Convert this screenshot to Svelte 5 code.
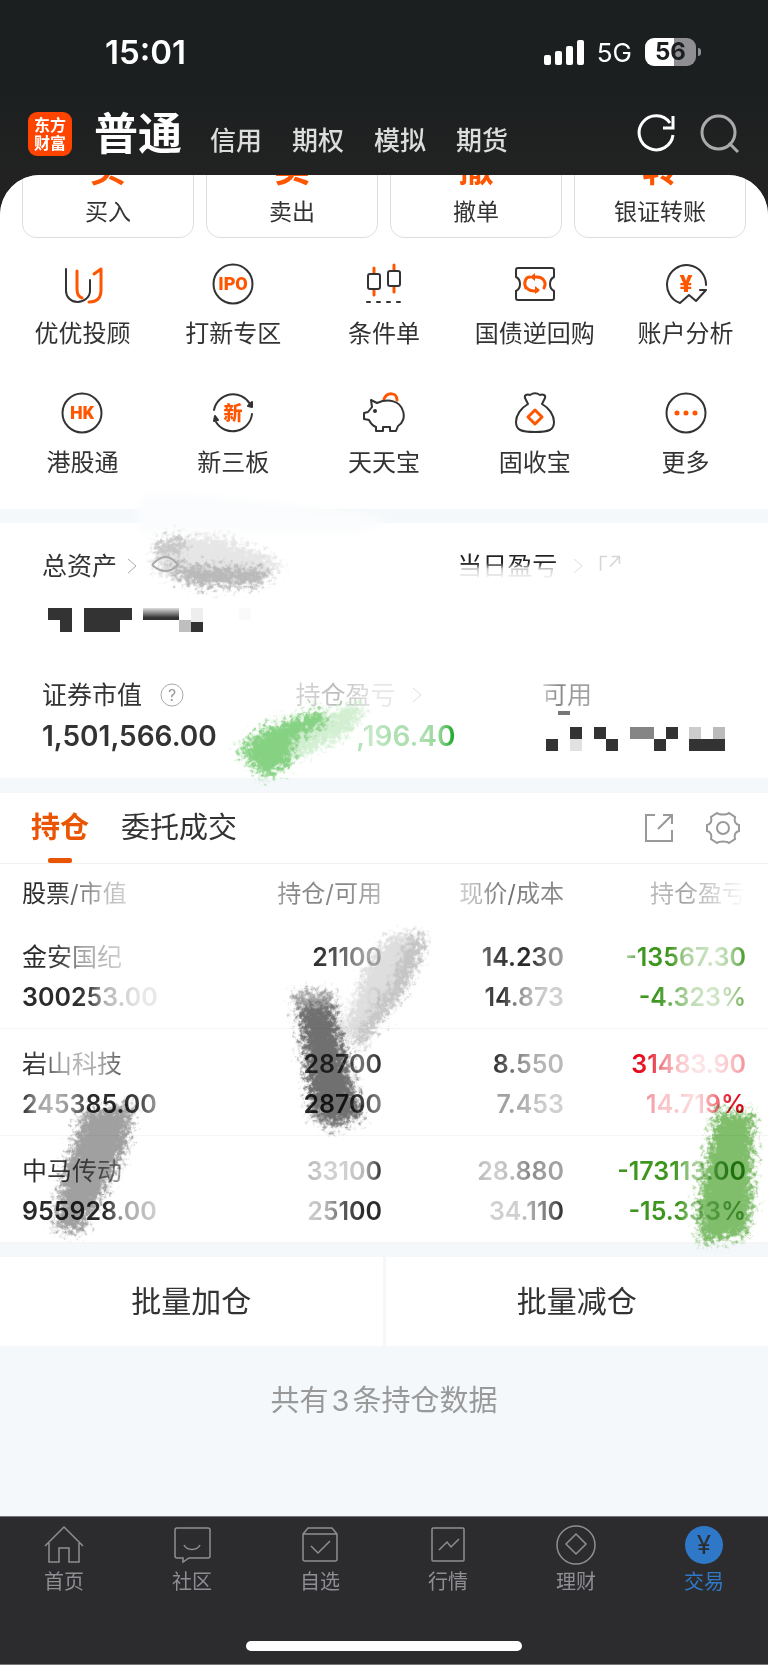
<script>
    const accounts = ["信用", "期权", "模拟", "期货"];

    const trades = [
        { glyph: "买", label: "买入" },
        { glyph: "卖", label: "卖出" },
        { glyph: "撤", label: "撤单" },
        { glyph: "转", label: "银证转账" },
    ];

    const tools = [
        { icon: "advisor", label: "优优投顾" },
        { icon: "ipo", label: "打新专区" },
        { icon: "candles", label: "条件单" },
        { icon: "repo", label: "国债逆回购" },
        { icon: "analysis", label: "账户分析" },
        { icon: "hk", label: "港股通" },
        { icon: "newboard", label: "新三板" },
        { icon: "piggy", label: "天天宝" },
        { icon: "bag", label: "固收宝" },
        { icon: "more", label: "更多" },
    ];

    // text, tone, and the opacity along the text from 0 to 9
    const headers = [
        ["股票/市值", "ink", "998532"],
        ["持仓/可用", "ink", "4555543"],
        ["现价/成本", "ink", "2356555"],
        ["持仓盈亏", "ink", "3343210"],
    ];

    const holdings = [
        [
            [["金安国纪", "ink", "998432"], ["300253.00", "ink", "999983211"]],
            [["21100", "ink", "98643"], ["21100", "ink", "00001"]],
            [["14.230", "ink", "689954"], ["14.873", "ink", "795322"]],
            [["-13567.30", "green", "399943249"], ["-4.323%", "green", "9963237"]],
        ],
        [
            [["岩山科技", "ink", "984347"], ["245385.00", "ink", "943599984"]],
            [["28700", "ink", "88869"], ["28700", "ink", "99985"]],
            [["8.550", "ink", "96433"], ["7.453", "ink", "44322"]],
            [["31483.90", "red", "98421124"], ["14.719%", "red", "4221489"]],
        ],
        [
            [["中马传动", "ink", "998764"], ["955928.00", "ink", "999999432"]],
            [["33100", "ink", "32239"], ["25100", "ink", "23799"]],
            [["28.880", "ink", "323544"], ["34.110", "ink", "222469"]],
            [["-173113.00", "green", "9999953699"], ["-15.333%", "green", "99994467"]],
        ],
    ];

    const navs = [
        { icon: "home", label: "首页" },
        { icon: "community", label: "社区" },
        { icon: "watchlist", label: "自选" },
        { icon: "market", label: "行情" },
        { icon: "wealth", label: "理财" },
        { icon: "trade", label: "交易", active: true },
    ];

    const tones = {
        ink: "42, 42, 42",
        green: "62, 150, 30",
        lime: "10, 160, 20",
        red: "228, 0, 18",
    };

    function fade(tone, levels) {
        const stops = [...levels].map((n) => `rgba(${tones[tone]}, ${(n / 9).toFixed(2)})`);
        return `background-image: linear-gradient(90deg, ${stops.join(", ")})`;
    }
</script>

{#snippet faded([text, tone, levels])}
    <span class="faded" style={fade(tone, levels)}>{text}</span>
{/snippet}

{#snippet chevron()}
    <svg class="chevron" width="10" height="16" viewBox="0 0 10 16"><path d="M1 1l8 7-8 7" /></svg>
{/snippet}

<div class="page">
    <header>
        <div class="status">
            <span class="time">15:01</span>
            <div class="signals">
                <svg width="40" height="25" viewBox="0 0 40 25" fill="#fff">
                    <rect x="0" y="15" width="7" height="10" rx="2" />
                    <rect x="11" y="11" width="7" height="14" rx="2" />
                    <rect x="22" y="6" width="7" height="19" rx="2" />
                    <rect x="33" y="0" width="7" height="25" rx="2" />
                </svg>
                <span class="network">5G</span>
                <span class="battery">56</span>
            </div>
        </div>
        <nav class="accounts">
            <a class="logo" href="#home"><span>东方</span><span>财富</span></a>
            <a class="current" href="#normal">普通</a>
            {#each accounts as account}
                <a class="account" href="#account">{account}</a>
            {/each}
            <button class="refresh" aria-label="刷新">
                <svg width="40" height="40" viewBox="0 0 40 40">
                    <path d="M33 9A17 17 0 1 0 36 21M36 2v12H26" />
                </svg>
            </button>
            <button class="search" aria-label="搜索">
                <svg width="40" height="40" viewBox="0 0 40 40">
                    <circle cx="18.5" cy="18.5" r="16.5" /><path d="M29 29l9 9" />
                </svg>
            </button>
        </nav>
    </header>

    <main>
        <section class="shortcuts">
            <div class="trades">
                {#each trades as trade}
                    <button><b>{trade.glyph}</b><span>{trade.label}</span></button>
                {/each}
            </div>
            <div class="tools">
                {#each tools as tool}
                    <a href="#tool">
                        <svg class="tool" width="42" height="42" viewBox="0 0 42 42">
                            {#if tool.icon === "advisor"}
                                <path d="M5 6v22c0 6 5 11 11.5 11S29 34 29 28V17" />
                                <path class="hot" d="M16 8v18c0 5 2 8 5 9" />
                                <path class="hot" d="M33 11l7-5v21c0 8-4 12-12 12" />
                            {:else if tool.icon === "ipo"}
                                <circle cx="21" cy="21" r="19.5" />
                                <text x="21" y="27" font-size="18">IPO</text>
                            {:else if tool.icon === "candles"}
                                <path class="hot" d="M11 5v5M11 27v5M31 2v5M31 24v5" />
                                <rect x="5" y="11" width="12" height="15" rx="2" />
                                <rect x="25" y="8" width="12" height="15" rx="2" />
                                <path d="M4 39h3M14 39h3M24 39h3M34 39h3" />
                            {:else if tool.icon === "repo"}
                                <path d="M4 5h34q2 0 2 2v7c-2 1-4 4-4 7s2 6 4 7v7q0 2-2 2H4q-2 0-2-2v-7c2-1 4-4 4-7s-2-6-4-7V7q0-2 2-2z" />
                                <path class="hot" d="M12 25c-3-6 0-11 4-11M19 14h4c6 0 10 5 7 11M20 28h2M13 25c2 3 5 3 10 3" />
                                <path class="hot-solid" d="M16 14l5-4v8zM26 27l-5-4v8z" />
                            {:else if tool.icon === "analysis"}
                                <path d="M41 22A19.5 19.5 0 1 0 15 40l9-8 7 6 10-11h-6" />
                                <text x="21" y="29" font-size="24">¥</text>
                            {:else if tool.icon === "hk"}
                                <circle cx="21" cy="21" r="19.5" />
                                <text x="21" y="27" font-size="18">HK</text>
                            {:else if tool.icon === "newboard"}
                                <path d="M2 18A19.5 19.5 0 0 1 38 12M40 22A19.5 19.5 0 0 1 4 30" />
                                <path class="solid" d="M36 14l4 1v-5zM2 29l1-5 3 4z" />
                                <text x="21" y="28" font-size="19">新</text>
                            {:else if tool.icon === "piggy"}
                                <path class="hot" d="M21 7c3-7 13-7 13 1" />
                                <path d="M14 11L8 8l1 7-4 5-4 1v6l5 1c2 4 4 6 7 7v4h7v-4h7v4h6l2-5c5-3 7-9 5-15-3-10-14-13-26-8z" />
                                <circle class="solid" cx="12" cy="19" r="1" />
                            {:else if tool.icon === "bag"}
                                <path d="M14 12L11 6c-1-3 2-4 5-3 3-2 7-2 10 0 3-1 6 0 5 3l-3 6c7 4 12 11 12 18 0 8-5 10-19 10S2 38 2 30c0-7 5-14 12-18z" />
                                <path class="hot" d="M21 18l7 7-7 7-7-7z" />
                            {:else}
                                <circle cx="21" cy="21" r="19.5" />
                                <path class="dots" d="M12 21h0M21 21h0M30 21h0" />
                            {/if}
                        </svg>
                        <span>{tool.label}</span>
                    </a>
                {/each}
            </div>
        </section>

        <section class="assets">
            <div class="totals">
                <div class="label">总资产 {@render chevron()}</div>
                <div class="label wide">
                    <span class="erased">当日盈亏</span>
                    {@render chevron()}
                    <svg class="popout pale" width="22" height="22" viewBox="0 0 28 28">
                        <path d="M2 20V2h8M16 2h10v9M26 2L14 15" />
                    </svg>
                </div>
            </div>
            <svg class="mosaic" width="220" height="24" viewBox="0 0 220 24">
                <defs>
                    <linearGradient id="worn" x2="0" y2="1">
                        <stop offset="0" stop-color="#ddd" />
                        <stop offset="0.5" stop-color="#777" />
                        <stop offset="0.8" stop-color="#333" />
                    </linearGradient>
                </defs>
                <path d="M6 0h24v24H18V12H6zM42 0h48v12H78v12H42zM149 14h12v10h-12z" />
                <rect x="101" width="36" height="12" fill="url(#worn)" />
                <rect x="137" y="12" width="12" height="12" fill="#bfbfbf" />
                <rect x="149" width="12" height="14" fill="#eee" />
                <rect x="197" width="12" height="12" fill="#fafafa" />
            </svg>
            <div class="details">
                <div>
                    <div class="label">
                        证券市值
                        <svg class="help" width="24" height="24" viewBox="0 0 24 24">
                            <circle cx="12" cy="12" r="11" /><text x="12" y="18">?</text>
                        </svg>
                    </div>
                    <div class="value">1,501,566.00</div>
                </div>
                <div>
                    <div class="label wide">{@render faded(["持仓盈亏", "ink", "223211"])} {@render chevron()}</div>
                    <div class="value profit">{@render faded([",196.40", "lime", "3233349"])}</div>
                </div>
                <div>
                    <div class="label">{@render faded(["可用", "ink", "2544"])}</div>
                    <svg class="mosaic cash" width="184" height="40" viewBox="0 0 184 40">
                        <path d="M4 28h12v12H4zM28 16h12v12H28zM52 16h12v12h12v12H64V28H52zM124 16h12v12h-12v12h-12V28h12zM147 28h36v12h-36z" />
                        <rect x="28" y="28" width="12" height="12" fill="#e1e1e1" />
                        <rect x="88" y="16" width="24" height="12" fill="#858585" />
                        <rect x="147" y="16" width="12" height="12" fill="#ccc" />
                        <rect x="171" y="16" width="12" height="12" fill="#bbb" />
                        <rect x="16" width="12" height="4" fill="#777" />
                    </svg>
                </div>
            </div>
            <svg class="smears" width="768" height="320" viewBox="0 480 768 320" aria-hidden="true">
                <defs>
                    <filter id="chalk" x="-30%" y="-30%" width="160%" height="160%">
                        <feTurbulence type="fractalNoise" baseFrequency="0.22" numOctaves="4" seed="4" result="noise" />
                        <feGaussianBlur in="SourceGraphic" stdDeviation="3" result="soft" />
                        <feDisplacementMap in="soft" in2="noise" scale="26" xChannelSelector="R" yChannelSelector="G" />
                        <feGaussianBlur stdDeviation="0.6" />
                    </filter>
                    <filter id="mist" x="-20%" y="-60%" width="140%" height="220%">
                        <feGaussianBlur stdDeviation="5" />
                    </filter>
                </defs>
                <path d="M136 508l10-14 60 2 150 16 36 8-30 12H140z" fill="#fbfcfd" filter="url(#mist)" />
                <g filter="url(#chalk)">
                    <path d="M154 543l18-7 50 1 42 17 20 12-34 18-60 2-34-14z" fill="#e6e6e6" />
                    <path d="M156 543l18-6 14 4-10 12-20 4z" fill="#c6c6c6" />
                    <path d="M168 564l94 4 10 6-14 12-60 1-26-12z" fill="#b9b9b9" />
                    <path d="M290 730l62-26 14 4-18 26-60 29z" fill="#d2efd2" />
                    <path d="M238 750l22-20 62-22 6 14-34 19-1 22-30 16z" fill="#86d283" />
                </g>
                <path class="eye" d="M152 565q14-16 26 0-12 12-26 0" />
            </svg>
        </section>

        <section class="positions">
            <div class="tabs">
                <button class="tab active">持仓</button>
                <button class="tab">委托成交</button>
                <button class="tab-icon first" aria-label="分享">
                    <svg class="popout" width="28" height="28" viewBox="0 0 28 28">
                        <path d="M10 1H1v26h26V16M18 1h9v9M27 1L13 15" />
                    </svg>
                </button>
                <button class="tab-icon" aria-label="设置">
                    <svg class="popout" width="34" height="34" viewBox="0 0 34 34">
                        <path d="M11 2c2 2 10 2 12 0l6 4c-1 4 0 7 4 8v6c-4 1-5 4-4 8l-6 4c-2-2-10-2-12 0l-6-4c1-4 0-7-4-8v-6c4-1 5-4 4-8z" />
                        <circle cx="17" cy="17" r="6" />
                    </svg>
                </button>
            </div>
            <table>
                <thead>
                    <tr>
                        {#each headers as header}
                            <th scope="col">{@render faded(header)}</th>
                        {/each}
                    </tr>
                </thead>
                <tbody>
                    {#each holdings as holding}
                        <tr>
                            {#each holding as [top, bottom]}
                                <td>
                                    <div>{@render faded(top)}</div>
                                    <div>{@render faded(bottom)}</div>
                                </td>
                            {/each}
                        </tr>
                    {/each}
                </tbody>
            </table>
            <svg class="strokes" width="768" height="340" viewBox="0 920 768 340" aria-hidden="true">
                <g filter="url(#chalk)">
                    <path d="M388 936l36-3-1 20-62 98-18-22 25-66z" fill="#dedede" />
                    <path d="M410 936l14-4-2 24-20 40-42 50-6-8 36-50z" fill="#c4c4c4" />
                    <path d="M294 992l38 0 31 126-30 12-22-12z" fill="#a5a5a5" />
                    <path d="M300 1006l31-2 28 112-27 8-20-16z" fill="#707070" />
                    <path d="M84 1110l50-6-8 46-24 46-22 38-26-6 8-52z" fill="#a0a0a0" />
                    <path d="M716 1110l38 4-2 94-6 28-46 8-2-44 10-50z" fill="#80be6c" />
                </g>
            </svg>
        </section>

        <div class="batch">
            <button>批量加仓</button>
            <button>批量减仓</button>
        </div>
        <p class="count">共有<span>3</span>条持仓数据</p>
    </main>

    <footer>
        <nav class="bottom">
            {#each navs as nav}
                <a class:active={nav.active} href="#nav">
                    <svg width="40" height="40" viewBox="0 0 40 40">
                        {#if nav.icon === "home"}
                            <path d="M1 21L20 2l19 19M5 18v19h10V23h10v14h10V18" />
                        {:else if nav.icon === "community"}
                            <path d="M3 5q0-2 2-2h31q2 0 2 2v26q0 2-2 2H17l-6 4v-4H5q-2 0-2-2zM12 20c3 6 13 6 16 0" />
                        {:else if nav.icon === "watchlist"}
                            <path d="M3 9l5-6h24l5 6v25q0 2-2 2H5q-2 0-2-2zM3 9h34M11 21l7 7 12-12" />
                        {:else if nav.icon === "market"}
                            <rect x="4" y="3" width="32" height="33" rx="1" /><path d="M11 25l8-8 4 5 8-8" />
                        {:else if nav.icon === "wealth"}
                            <circle cx="20" cy="20" r="19" /><path d="M20 9l10 10-10 10L10 19z" />
                        {:else}
                            <circle class="disc" cx="20" cy="20" r="19" /><text x="20" y="29">¥</text>
                        {/if}
                    </svg>
                    <span>{nav.label}</span>
                </a>
            {/each}
        </nav>
        <div class="indicator"></div>
    </footer>
</div>

<style>
    :global(body) {
        margin: 0;
        background: #1b1f20;
    }

    .page {
        font-family: Inter, "Noto Sans CJK SC", sans-serif;
        color: #333;
        background: linear-gradient(#1b1f20 80px, #222 175px);
    }

    button {
        font: inherit;
        color: inherit;
        border: 0;
        padding: 0;
        background: none;
        cursor: pointer;
    }

    a {
        color: inherit;
        text-decoration: none;
    }

    svg {
        display: block;
        flex: none;
    }

    .status {
        display: flex;
        align-items: center;
        justify-content: space-between;
        height: 104px;
        padding: 0 67px 0 105px;
        box-sizing: border-box;
        color: #fff;
    }

    .time {
        font-size: 33px;
        font-weight: 600;
    }

    .signals {
        display: flex;
        align-items: center;
        gap: 13px;
    }

    .network {
        font-size: 26px;
    }

    .battery {
        position: relative;
        width: 51px;
        line-height: 28px;
        border-radius: 9px;
        background: linear-gradient(90deg, #fff 56%, #8e8e93 56%);
        color: #1b1f20;
        font-size: 24px;
        font-weight: 700;
        text-align: center;
        margin-right: 5px;
    }

    .battery::after {
        content: "";
        position: absolute;
        right: -5px;
        top: 10px;
        width: 3px;
        height: 8px;
        border-radius: 0 3px 3px 0;
        background: #8e8e93;
    }

    .accounts {
        display: flex;
        align-items: center;
        height: 71px;
        padding: 0 28px;
        color: #dcdcdc;
    }

    .logo {
        display: flex;
        flex-direction: column;
        justify-content: center;
        width: 44px;
        height: 44px;
        margin: 0 22px 12px 0;
        border-radius: 9px;
        background: #ff4400;
        color: #fff;
        font-size: 16px;
        font-weight: 700;
        line-height: 18px;
        text-align: center;
    }

    .current {
        margin: 0 28px 12px 0;
        color: #fff;
        font-size: 44px;
        font-weight: 700;
        line-height: 50px;
    }

    .account {
        margin: 2px 30px 0 0;
        font-size: 26px;
        font-weight: 500;
        line-height: 40px;
    }

    .refresh,
    .search {
        margin-bottom: 12px;
        fill: none;
        stroke: #fff;
        stroke-width: 3;
    }

    .refresh {
        margin-left: auto;
    }

    .search {
        margin-left: 23px;
        stroke: #aaa;
    }

    main {
        overflow: hidden;
        border-radius: 40px 40px 0 0;
        background: #f4f8fa;
    }

    section {
        position: relative;
        background: #fff;
    }

    .shortcuts {
        padding-bottom: 31px;
    }

    .trades {
        display: grid;
        grid-template-columns: repeat(4, 1fr);
        gap: 12px;
        margin-top: -44px;
        padding: 0 22px;
    }

    .trades button {
        display: flex;
        flex-direction: column;
        align-items: center;
        gap: 6px;
        padding: 15px 0 10px;
        border: 1px solid #ddd;
        border-radius: 14px;
        font-size: 23px;
        line-height: 30px;
    }

    .trades b {
        color: #ff5500;
        font-size: 36px;
        line-height: 44px;
    }

    .tools {
        display: grid;
        grid-template-columns: repeat(5, 1fr);
        row-gap: 43px;
        padding: 25px 7px 0;
    }

    .tools a {
        display: flex;
        flex-direction: column;
        align-items: center;
        gap: 14px;
        font-size: 24px;
        line-height: 30px;
    }

    .tool {
        fill: none;
        stroke: #333;
        stroke-width: 2;
        stroke-linejoin: round;
        stroke-linecap: round;
    }

    .tool .hot {
        stroke: #ff5500;
        stroke-width: 3;
    }

    .tool .dots {
        stroke: #ff5500;
        stroke-width: 5;
    }

    .tool .solid {
        fill: #333;
    }

    .tool .hot-solid {
        fill: #ff5500;
        stroke: none;
    }

    .tool text {
        fill: #ff5500;
        stroke: none;
        font-family: Roboto, "Noto Sans CJK SC", sans-serif;
        font-weight: 900;
        text-anchor: middle;
    }

    .assets {
        margin: 14px 0 15px;
        padding: 28px 42px 24px;
    }

    .totals {
        display: grid;
        grid-template-columns: 414fr 268fr;
    }

    .details {
        display: grid;
        grid-template-columns: 253fr 246fr 183fr;
        margin-top: 48px;
    }

    .label {
        display: flex;
        align-items: center;
        gap: 10px;
        font-size: 25px;
        line-height: 30px;
    }

    .label.wide {
        gap: 16px;
    }

    .chevron {
        fill: none;
        stroke: #aaa;
        stroke-width: 1;
    }

    .wide .chevron {
        opacity: 0.4;
    }

    .erased {
        background: linear-gradient(#222 40%, #ccc 60%, #f4f4f4 90%);
        background-clip: text;
        color: transparent;
    }

    .faded {
        background-clip: text;
        color: transparent;
    }

    .popout {
        fill: none;
        stroke: #999;
        stroke-width: 2;
    }

    .pale {
        opacity: 0.4;
    }

    .mosaic {
        margin-top: 27px;
        fill: #333;
    }

    .mosaic.cash {
        margin-top: 1px;
    }

    .help {
        margin-left: 8px;
        fill: none;
        stroke: #aaa;
        stroke-width: 1;
    }

    .help text {
        fill: #999;
        stroke: none;
        font-size: 16px;
        text-anchor: middle;
    }

    .value {
        margin-top: 8px;
        font-size: 28px;
        font-weight: 600;
        line-height: 36px;
    }

    .profit {
        width: 160px;
        text-align: right;
    }

    .smears,
    .strokes {
        position: absolute;
        left: 0;
        pointer-events: none;
    }

    .smears {
        top: -43px;
    }

    .eye {
        fill: none;
        stroke: #aaa;
        stroke-width: 2;
    }

    .tabs {
        display: flex;
        align-items: center;
        height: 70px;
        padding: 0 28px 0 31px;
        border-bottom: 1px solid #f0f0f0;
    }

    .tab {
        position: relative;
        margin-right: 32px;
        font-size: 29px;
        line-height: 70px;
    }

    .tab.active {
        color: #ea5504;
        font-weight: 700;
    }

    .tab.active::after {
        content: "";
        position: absolute;
        left: 50%;
        bottom: 0;
        width: 24px;
        height: 5px;
        margin-left: -12px;
        border-radius: 2px;
        background: #ea5504;
    }

    .tab-icon.first {
        margin: 0 33px 0 auto;
    }

    table {
        width: 100%;
        table-layout: fixed;
        border-collapse: collapse;
    }

    th,
    td {
        padding: 0;
        text-align: right;
    }

    th {
        box-sizing: border-box;
        height: 58px;
        padding-bottom: 4px;
        font-size: 24px;
        font-weight: 400;
    }

    td {
        padding: 15px 0 11px;
        border-bottom: 1px solid #f5f5f5;
        font-size: 25px;
        font-weight: 600;
        line-height: 40px;
    }

    th:first-child,
    td:first-child {
        padding-left: 22px;
        text-align: left;
    }

    td:first-child div:first-child {
        font-weight: 400;
    }

    th:nth-child(3) {
        width: 182px;
    }

    th:last-child {
        width: 204px;
    }

    th:last-child,
    td:last-child {
        box-sizing: border-box;
        padding-right: 22px;
    }

    .strokes {
        bottom: -17px;
        z-index: 1;
        mix-blend-mode: multiply;
    }

    .batch {
        display: grid;
        grid-template-columns: 1fr 1fr;
        gap: 3px;
        margin-top: 14px;
    }

    .batch button {
        background: #fff;
        font-size: 30px;
        line-height: 89px;
    }

    .count {
        margin: 0;
        padding: 35px 0 95px;
        color: #999;
        font-size: 29px;
        line-height: 40px;
        text-align: center;
    }

    .count span {
        margin: 0 3px;
    }

    footer {
        padding-bottom: 13px;
        border-top: 1px solid #777;
        border-bottom: 1px solid #777;
        background: #2c2c2e;
    }

    .bottom {
        display: grid;
        grid-template-columns: repeat(6, 1fr);
        padding-top: 8px;
        color: #8e8e93;
    }

    .bottom a {
        display: flex;
        flex-direction: column;
        align-items: center;
        gap: 5px;
        font-size: 20px;
        line-height: 24px;
    }

    .bottom svg {
        fill: none;
        stroke: #8e8e93;
        stroke-width: 1.5;
    }

    .bottom .active {
        color: #2f78c8;
    }

    .bottom .disc {
        fill: #2f78c8;
        stroke: none;
    }

    .bottom text {
        fill: #2c2c2e;
        stroke: none;
        font-size: 26px;
        text-anchor: middle;
    }

    .indicator {
        width: 36%;
        height: 10px;
        margin: 47px auto 0;
        border-radius: 5px;
        background: #fff;
    }
</style>
